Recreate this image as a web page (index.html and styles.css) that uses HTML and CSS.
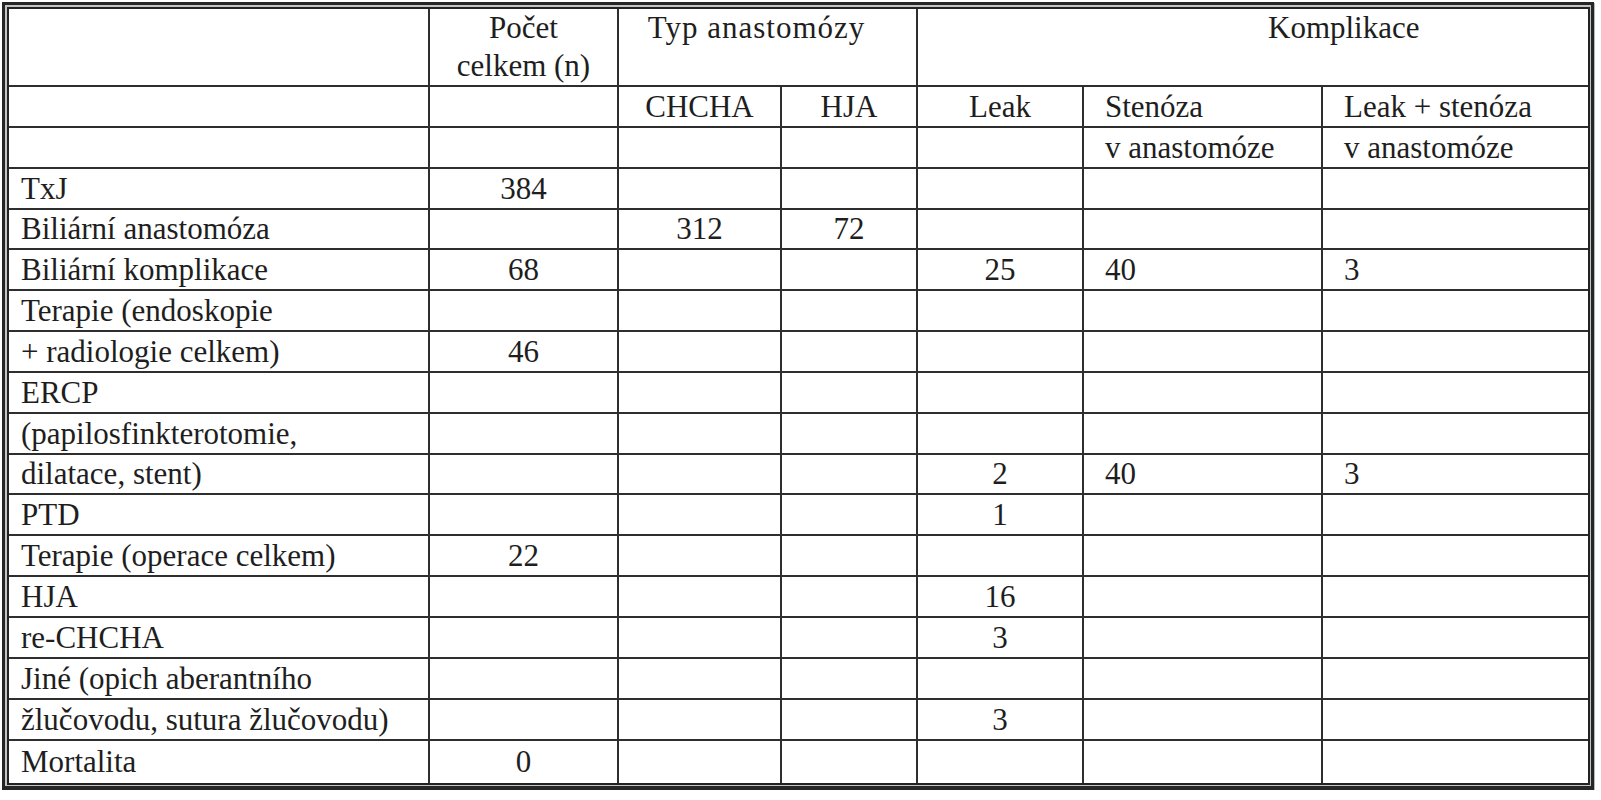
FILE: index.html
```html
<!DOCTYPE html>
<html lang="cs">
<head>
<meta charset="utf-8">
<title>Biliární komplikace</title>
<link rel="stylesheet" href="styles.css">
</head>
<body>
<div class="page">
  <div class="frame">
    <table class="grid">
      <colgroup>
        <col class="w1"><col class="w2"><col class="w3"><col class="w4"><col class="w5"><col class="w6"><col class="w7">
      </colgroup>
      <tr class="head">
        <td class="first"></td>
        <td class="c">Počet<br>celkem (n)</td>
        <td class="typ" colspan="2">Typ anastomózy</td>
        <td class="kompl last" colspan="3">Komplikace</td>
      </tr>
      <tr>
        <td class="first"></td><td></td><td class="c">CHCHA</td><td class="c">HJA</td><td class="c">Leak</td><td class="l">Stenóza</td><td class="l last">Leak + stenóza</td>
      </tr>
      <tr>
        <td class="first"></td><td></td><td></td><td></td><td></td><td class="l">v anastomóze</td><td class="l last">v anastomóze</td>
      </tr>
      <tr>
        <td class="first">TxJ</td><td class="c">384</td><td></td><td></td><td></td><td></td><td class="last"></td>
      </tr>
      <tr class="short">
        <td class="first">Biliární anastomóza</td><td></td><td class="c">312</td><td class="c">72</td><td></td><td></td><td class="last"></td>
      </tr>
      <tr>
        <td class="first">Biliární komplikace</td><td class="c">68</td><td></td><td></td><td class="c">25</td><td class="l">40</td><td class="l last">3</td>
      </tr>
      <tr>
        <td class="first">Terapie (endoskopie</td><td></td><td></td><td></td><td></td><td></td><td class="last"></td>
      </tr>
      <tr>
        <td class="first">+ radiologie celkem)</td><td class="c">46</td><td></td><td></td><td></td><td></td><td class="last"></td>
      </tr>
      <tr>
        <td class="first">ERCP</td><td></td><td></td><td></td><td></td><td></td><td class="last"></td>
      </tr>
      <tr>
        <td class="first">(papilosfinkterotomie,</td><td></td><td></td><td></td><td></td><td></td><td class="last"></td>
      </tr>
      <tr class="short">
        <td class="first">dilatace, stent)</td><td></td><td></td><td></td><td class="c">2</td><td class="l">40</td><td class="l last">3</td>
      </tr>
      <tr>
        <td class="first">PTD</td><td></td><td></td><td></td><td class="c">1</td><td></td><td class="last"></td>
      </tr>
      <tr>
        <td class="first">Terapie (operace celkem)</td><td class="c">22</td><td></td><td></td><td></td><td></td><td class="last"></td>
      </tr>
      <tr>
        <td class="first">HJA</td><td></td><td></td><td></td><td class="c">16</td><td></td><td class="last"></td>
      </tr>
      <tr>
        <td class="first">re-CHCHA</td><td></td><td></td><td></td><td class="c">3</td><td></td><td class="last"></td>
      </tr>
      <tr>
        <td class="first">Jiné (opich aberantního</td><td></td><td></td><td></td><td></td><td></td><td class="last"></td>
      </tr>
      <tr>
        <td class="first">žlučovodu, sutura žlučovodu)</td><td></td><td></td><td></td><td class="c">3</td><td></td><td class="last"></td>
      </tr>
      <tr class="end">
        <td class="first">Mortalita</td><td class="c">0</td><td></td><td></td><td></td><td></td><td class="last"></td>
      </tr>
    </table>
  </div>
</div>
</body>
</html>
```

FILE: styles.css
```css
html, body {
  margin: 0;
  padding: 0;
  background: #ffffff;
}

.page {
  padding: 2px 0 0 2px;
}

.frame {
  display: inline-block;
  vertical-align: top;
  border-style: solid;
  border-color: #262626;
  border-width: 3px 3px 4px 3px;
  padding: 2px 1px 1px 2px;
  background: #c4c4c4;
  box-shadow: 1px 1px 0 #b8b8b8;
}

.grid {
  table-layout: fixed;
  border-collapse: separate;
  border-spacing: 0;
  width: 1583px;
  border: 2px solid #222222;
  background: #ffffff;
  font-family: "Liberation Serif", "Times New Roman", serif;
  font-size: 31px;
  color: #1e1e1e;
}

.w1 { width: 421px; }
.w2 { width: 189px; }
.w3 { width: 163px; }
.w4 { width: 136px; }
.w5 { width: 166px; }
.w6 { width: 239px; }
.w7 { width: 265px; }

.grid tr {
  height: 41px;
}

.grid tr.short {
  height: 40px;
}

.grid tr.end {
  height: 42px;
}

.grid td {
  box-sizing: border-box;
  padding: 0;
  border-right: 2px solid #2e2e2e;
  border-bottom: 2px solid #2e2e2e;
  line-height: 38px;
  vertical-align: middle;
  white-space: nowrap;
  overflow: hidden;
}

.grid tr.head {
  height: 78px;
}

.grid tr.head td {
  vertical-align: top;
  line-height: 38px;
}

.grid tr.end td {
  border-bottom: none;
}

.grid td.last {
  border-right: none;
}

.grid td.first {
  padding-left: 12px;
}

.grid td.c {
  text-align: center;
}

.grid td.typ {
  text-align: center;
  padding-right: 22px;
  letter-spacing: 1px;
}

.grid td.l {
  padding-left: 21px;
}

.grid td.kompl {
  padding-left: 350px;
}
```
